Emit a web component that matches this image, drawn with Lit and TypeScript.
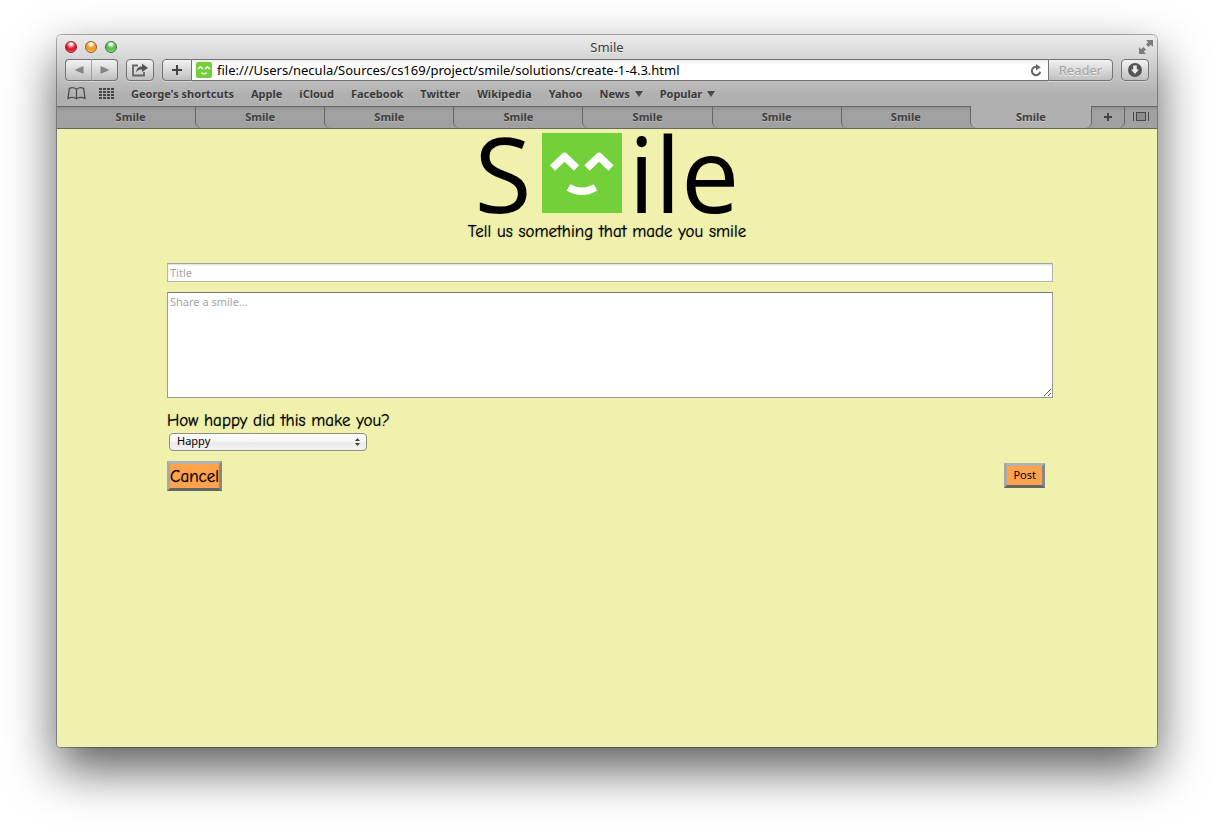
import { LitElement, html, css, svg } from "lit";
import { customElement, property, state } from "lit/decorators.js";
import { classMap } from "lit/directives/class-map.js";

const uiFont = css`"Lucida Grande", "Noto Sans", "Open Sans", sans-serif`;

@customElement("smile-face")
class SmileFace extends LitElement {
  static styles = css`
    :host { display: block; }
    svg { display: block; width: 100%; height: 100%; }
  `;
  render() {
    return html`<svg viewBox="0 0 80 80" aria-hidden="true">
      <rect width="80" height="80" fill="#72d139" />
      <g fill="none" stroke="#fff" stroke-width="7.5" stroke-linejoin="round">
        <path d="M10.5 35L22.5 23.5L34.5 35" />
        <path d="M45 35L57 23.5L69 35" />
        <path d="M26.500 54.500Q40 62 53.500 54.500" />
      </g>
    </svg>`;
  }
}

@customElement("browser-toolbar")
class BrowserToolbar extends LitElement {
  @property() address = "";
  @property() heading = "";

  static styles = css`
    :host { display: block; font-family: ${uiFont}; color: #3a3a3a; }
    svg { display: block; }
    button { font: inherit; color: inherit; margin: 0; padding: 0; }
    .title-row { display: grid; grid-template-columns: 1fr auto 1fr; align-items: center; height: 23px; padding: 0 4px; }
    .lights { display: flex; gap: 8px; margin-left: 4px; }
    .light { box-sizing: border-box; width: 12px; height: 12px; border-radius: 50%; border: 1px solid; }
    .close { border-color: #8c1a22; background: radial-gradient(circle at 50% 20%, #fff 0 10%, #ee3f4e 40%, #d81328 60%, #ff8d90 100%); }
    .minimize { border-color: #9a5a12; background: radial-gradient(circle at 50% 20%, #fff 0 10%, #f2a13a 40%, #ea9a25 60%, #ffe58a 100%); }
    .zoom { border-color: #2c7a2f; background: radial-gradient(circle at 50% 20%, #fff 0 10%, #6cc560 40%, #58bb50 60%, #c0ffa8 100%); }
    .heading { font-size: 13px; line-height: 18px; text-shadow: 0 1px 0 #f4f4f4; }
    .expand { justify-self: end; border: 0; background: none; }
    .tools { display: flex; height: 22px; padding: 0 8px; gap: 8px; margin-top: 1px; }
    .bevel {
      display: flex; align-items: center; justify-content: center; box-sizing: border-box;
      border: 1px solid #737373; border-radius: 4px;
      background: linear-gradient(#f2f2f2, #c0c0c0); box-shadow: 0 1px 0 rgba(255, 255, 255, 0.35);
    }
    .history { display: flex; }
    .back { width: 27px; border-radius: 4px 0 0 4px; border-right-color: #a2a2a2; }
    .forward { width: 26px; border-radius: 0 4px 4px 0; border-left: 0; }
    .square { width: 28px; }
    .location { flex: 1; display: flex; min-width: 0; }
    .add { width: 30px; border-radius: 4px 0 0 4px; }
    .field {
      flex: 1; min-width: 0; display: flex; align-items: center; gap: 5px; padding: 0 6px 0 4px;
      background: linear-gradient(#ececec, #fff 5px);
      border: solid #737373; border-width: 1px 0; box-sizing: border-box;
    }
    .favicon { width: 16px; height: 16px; border-radius: 2px; overflow: hidden; }
    .field input { flex: 1; min-width: 0; border: 0; padding: 0; background: none; color: #000; outline: 0; font: 13px/18px ${uiFont}; }
    .reload { border: 0; background: none; }
    .reader { width: 65px; border-radius: 0 4px 4px 0; }
    button.reader { font-size: 13px; color: #a3a3a3; text-shadow: 0 1px 0 #eee; }
    .bookmarks { display: flex; align-items: center; height: 25px; padding: 0 10px; gap: 17px; font-size: 11px; font-weight: 700; text-shadow: 0 1px 0 #c8c8c8; }
    .bookmarks a { display: flex; align-items: center; gap: 5px; color: inherit; text-decoration: none; white-space: nowrap; }
    .glyphs { display: flex; gap: 13px; }
    .glyphs button { border: 0; background: none; }
  `;

  private bookmarks = ["George's shortcuts", "Apple", "iCloud", "Facebook", "Twitter", "Wikipedia", "Yahoo", "News", "Popular"];
  private folders = new Set(["News", "Popular"]);

  render() {
    return html`
      <div class="title-row">
        <div class="lights"><div class="light close"></div><div class="light minimize"></div><div class="light zoom"></div></div>
        <div class="heading">${this.heading}</div>
        <button class="expand" aria-label="Full screen">
          <svg width="14" height="14" viewBox="0 0 14 14" fill="#7c7c7c">
            <path d="M7 0H14V7L11.800 4.800L9.500 7L7 4.500L9.200 2.200ZM0 7L2.200 9.200L4.500 7L7 9.500L4.800 11.800L7 14H0Z" />
          </svg>
        </button>
      </div>
      <div class="tools">
        <div class="history">
          <button class="bevel back" aria-label="Back"><svg width="10" height="8"><path d="M9.500 0V8L0.500 4Z" fill="#858585" /></svg></button>
          <button class="bevel forward" aria-label="Forward"><svg width="10" height="8"><path d="M0.500 0V8L9.500 4Z" fill="#858585" /></svg></button>
        </div>
        <button class="bevel square" aria-label="Share">
          <svg width="18" height="14" viewBox="0 0 18 14">
            <path d="M7 2.500H2V12.500H13V9" fill="none" stroke="#666" stroke-width="1.800" />
            <path d="M5 9.500C5.500 5 8 3.500 11 3.500V0.500L17 5L11 9V6.500C8.500 6.300 6.500 7 5 9.500Z" fill="#555" />
          </svg>
        </button>
        <div class="location">
          <button class="bevel add" aria-label="Add bookmark"><svg width="10" height="10"><path d="M5 0V10M0 5H10" stroke="#444" stroke-width="2" /></svg></button>
          <div class="field">
            <smile-face class="favicon"></smile-face>
            <input aria-label="Address" .value=${this.address} />
            <button class="reload" aria-label="Reload">
              <svg width="12" height="13" viewBox="0 0 12 13"><path d="M8 3.200A4.200 4.200 0 1 0 10.200 7.800" fill="none" stroke="#666" stroke-width="2" /><path d="M6 0L10.800 3.200L6 6.500Z" fill="#666" /></svg>
            </button>
          </div>
          <button class="bevel reader">Reader</button>
        </div>
        <button class="bevel square" aria-label="Downloads">
          <svg width="14" height="14" viewBox="0 0 14 14"><circle cx="7" cy="7" r="7" fill="#555" /><path d="M5.200 2.500H8.800V6.500H11L7 11L3 6.500H5.200Z" fill="#eee" /></svg>
        </button>
      </div>
      <nav class="bookmarks">
        <div class="glyphs">
          <button aria-label="Show bookmarks">
            <svg width="19" height="13" viewBox="0 0 19 13" fill="none" stroke="#4c4c4c" stroke-width="1.300"><path d="M9.500 2.200C7 0.500 4 0.500 2.300 1.600L1 11.500C4 10 7 10 9.500 11.700C12 10 15 10 18 11.500L16.700 1.600C15 0.500 12 0.500 9.500 2.200V11.500" /></svg>
          </button>
          <button aria-label="Top sites">
            <svg width="15" height="12" viewBox="0 0 15 12" fill="#444">
              ${[0, 3, 6, 9].map((y) => [0, 4, 8, 12].map((x) => svg`<rect x=${x} y=${y} width="3" height="2" />`))}
            </svg>
          </button>
        </div>
        ${this.bookmarks.map((name) => html`<a href="#">${name}${this.folders.has(name)
          ? html`<svg width="8" height="6"><path d="M0 0H8L4 6Z" fill="#484848" /></svg>` : ""}</a>`)}
      </nav>`;
  }
}

@customElement("tab-strip")
class TabStrip extends LitElement {
  @property({ type: Array }) tabs: string[] = [];
  @state() private active = 7;

  static styles = css`
    :host { display: block; font: 700 11px/18px ${uiFont}; }
    .strip {
      display: flex; height: 23px; box-sizing: border-box; padding-left: 8px;
      border: solid #666; border-width: 1px 0;
      background: linear-gradient(#929292, #a2a2a2 5px, #a0a0a0);
    }
    button {
      box-sizing: border-box; margin: 0; padding: 0 0 2px; border: 0; background: none;
      color: #404040; font: inherit; text-shadow: 0 1px 0 #b8b8b8;
      display: flex; align-items: center; justify-content: center;
    }
    .tab { flex: 129 1 0; min-width: 0; border-left: 1px solid #666; border-bottom-left-radius: 6px; }
    .tab:first-child { flex-grow: 130; border-color: transparent; border-radius: 0; }
    .active { flex-grow: 121; margin-top: -1px; padding-top: 1px; background: #b0b0b0; border-right: 1px solid #666; border-radius: 0 0 6px 6px; text-shadow: 0 1px 0 #ccc; }
    .new { width: 33px; border-right: 1px solid #666; border-bottom-right-radius: 6px; }
    .all { width: 32px; }
  `;

  render() {
    return html`<div class="strip">
      ${this.tabs.map((name, i) => html`<button
        class=${classMap({ tab: true, active: i === this.active })}
        @click=${() => (this.active = i)}>${name}</button>`)}
      <button class="new" aria-label="New tab"><svg width="8" height="8"><path d="M4 0V8M0 4H8" stroke="#444" stroke-width="2" /></svg></button>
      <button class="all" aria-label="Show all tabs">
        <svg width="16" height="9" viewBox="0 0 16 9"><rect x="3" y="0" width="10" height="9" fill="#8c8c8c" /><path d="M0.500 0V9M15.500 0V9M3.500 0V9M12.500 0V9M3 0.500H13M3 8.500H13" stroke="#484848" /></svg>
      </button>
    </div>`;
  }
}

@customElement("smile-form")
class SmileForm extends LitElement {
  static styles = css`
    :host { display: block; font: 17px/22px "Comic Sans MS", "Comic Neue", "Noto Sans", sans-serif; color: #000; }
    .logo { display: flex; justify-content: center; align-items: flex-start; margin: 0; padding-top: 4px; height: 92px; box-sizing: border-box; font: 400 104px/80px "Open Sans", "Noto Sans", sans-serif; }
    .face { width: 80px; height: 80px; margin: 0 7px 0 10px; }
    .tagline { margin: 0; text-align: center; }
    .tagline, .question, .cancel { text-shadow: 0 0 1px rgba(0, 0, 0, 0.6); }
    form { margin: 20px 104px 0 110px; }
    .text { display: block; width: 100%; box-sizing: border-box; margin: 0; border: 1px solid #999; border-radius: 0; background: #fff; font: 11px/15px ${uiFont}; outline: 0; }
    .text::placeholder { color: #a5a5a5; }
    .title { height: 19px; padding: 1px 2px; border-color: #a5a5a5 #b5b5b5 #b5b5b5; box-shadow: inset 0 1px 2px #ddd; }
    .story { height: 106px; margin-top: 10px; padding: 1px 2px; border-color: #777 #999 #999; }
    .question { display: block; margin-top: 12px; }
    .picker { position: relative; width: 198px; margin: 1px 0 0 2px; }
    select {
      appearance: none; display: block; width: 100%; height: 18px; box-sizing: border-box; margin: 0; padding: 0 7px 2px;
      border: 1px solid #8f8f80; border-radius: 4px; color: #000;
      background: linear-gradient(#fff, #f5f5f5 50%, #e9e9e9 50%, #f4f4f4); font: 11px/14px ${uiFont};
    }
    .arrows { position: absolute; right: 7px; top: 5px; pointer-events: none; }
    .actions { display: flex; justify-content: space-between; align-items: flex-start; margin: 10px 8px 0 0; }
    .actions button { border: 3px solid; border-color: #b2b2b2 #888 #666 #a8a8a8; border-radius: 0; background: #ffa34d; color: #000; margin: 0; }
    .cancel { height: 30px; padding: 2px 0 0; font: inherit; }
    .actions .post { height: 25px; margin-top: 2px; padding: 0 6px 2px; font: 11px/15px ${uiFont}; }
  `;

  render() {
    return html`
      <h1 class="logo" aria-label="Smile"><span>S</span><smile-face class="face"></smile-face><span>ile</span></h1>
      <p class="tagline">Tell us something that made you smile</p>
      <form @submit=${(e: Event) => e.preventDefault()}>
        <input class="text title" aria-label="Title" placeholder="Title" />
        <textarea class="text story" aria-label="Share a smile" placeholder="Share a smile..."></textarea>
        <label class="question" for="mood">How happy did this make you?</label>
        <div class="picker">
          <select id="mood"><option>Happy</option></select>
          <svg class="arrows" width="5" height="8"><path d="M0 3L2.500 0L5 3ZM0 5L2.500 8L5 5Z" fill="#444" /></svg>
        </div>
        <div class="actions">
          <button class="cancel" type="button">Cancel</button>
          <button class="post" type="submit">Post</button>
        </div>
      </form>`;
  }
}

@customElement("app-root")
class AppRoot extends LitElement {
  static styles = css`
    :host { display: flex; box-sizing: border-box; min-height: 100vh; padding: 35px 57px 79px; background: #fff; }
    .window {
      flex: 1; min-width: 0; display: flex; flex-direction: column; overflow: hidden;
      border-radius: 5px 5px 4px 4px;
      box-shadow: 0 0 0 1px rgba(0, 0, 0, 0.3), 0 22px 50px rgba(0, 0, 0, 0.65);
    }
    .chrome { background: linear-gradient(#ececec, #b0b0b0 60px); }
    .page { flex: 1; background: #f1f1ae; }
  `;

  render() {
    return html`<div class="window">
      <header class="chrome">
        <browser-toolbar heading="Smile" address="file:///Users/necula/Sources/cs169/project/smile/solutions/create-1-4.3.html"></browser-toolbar>
        <tab-strip .tabs=${Array(8).fill("Smile")}></tab-strip>
      </header>
      <main class="page"><smile-form></smile-form></main>
    </div>`;
  }
}
